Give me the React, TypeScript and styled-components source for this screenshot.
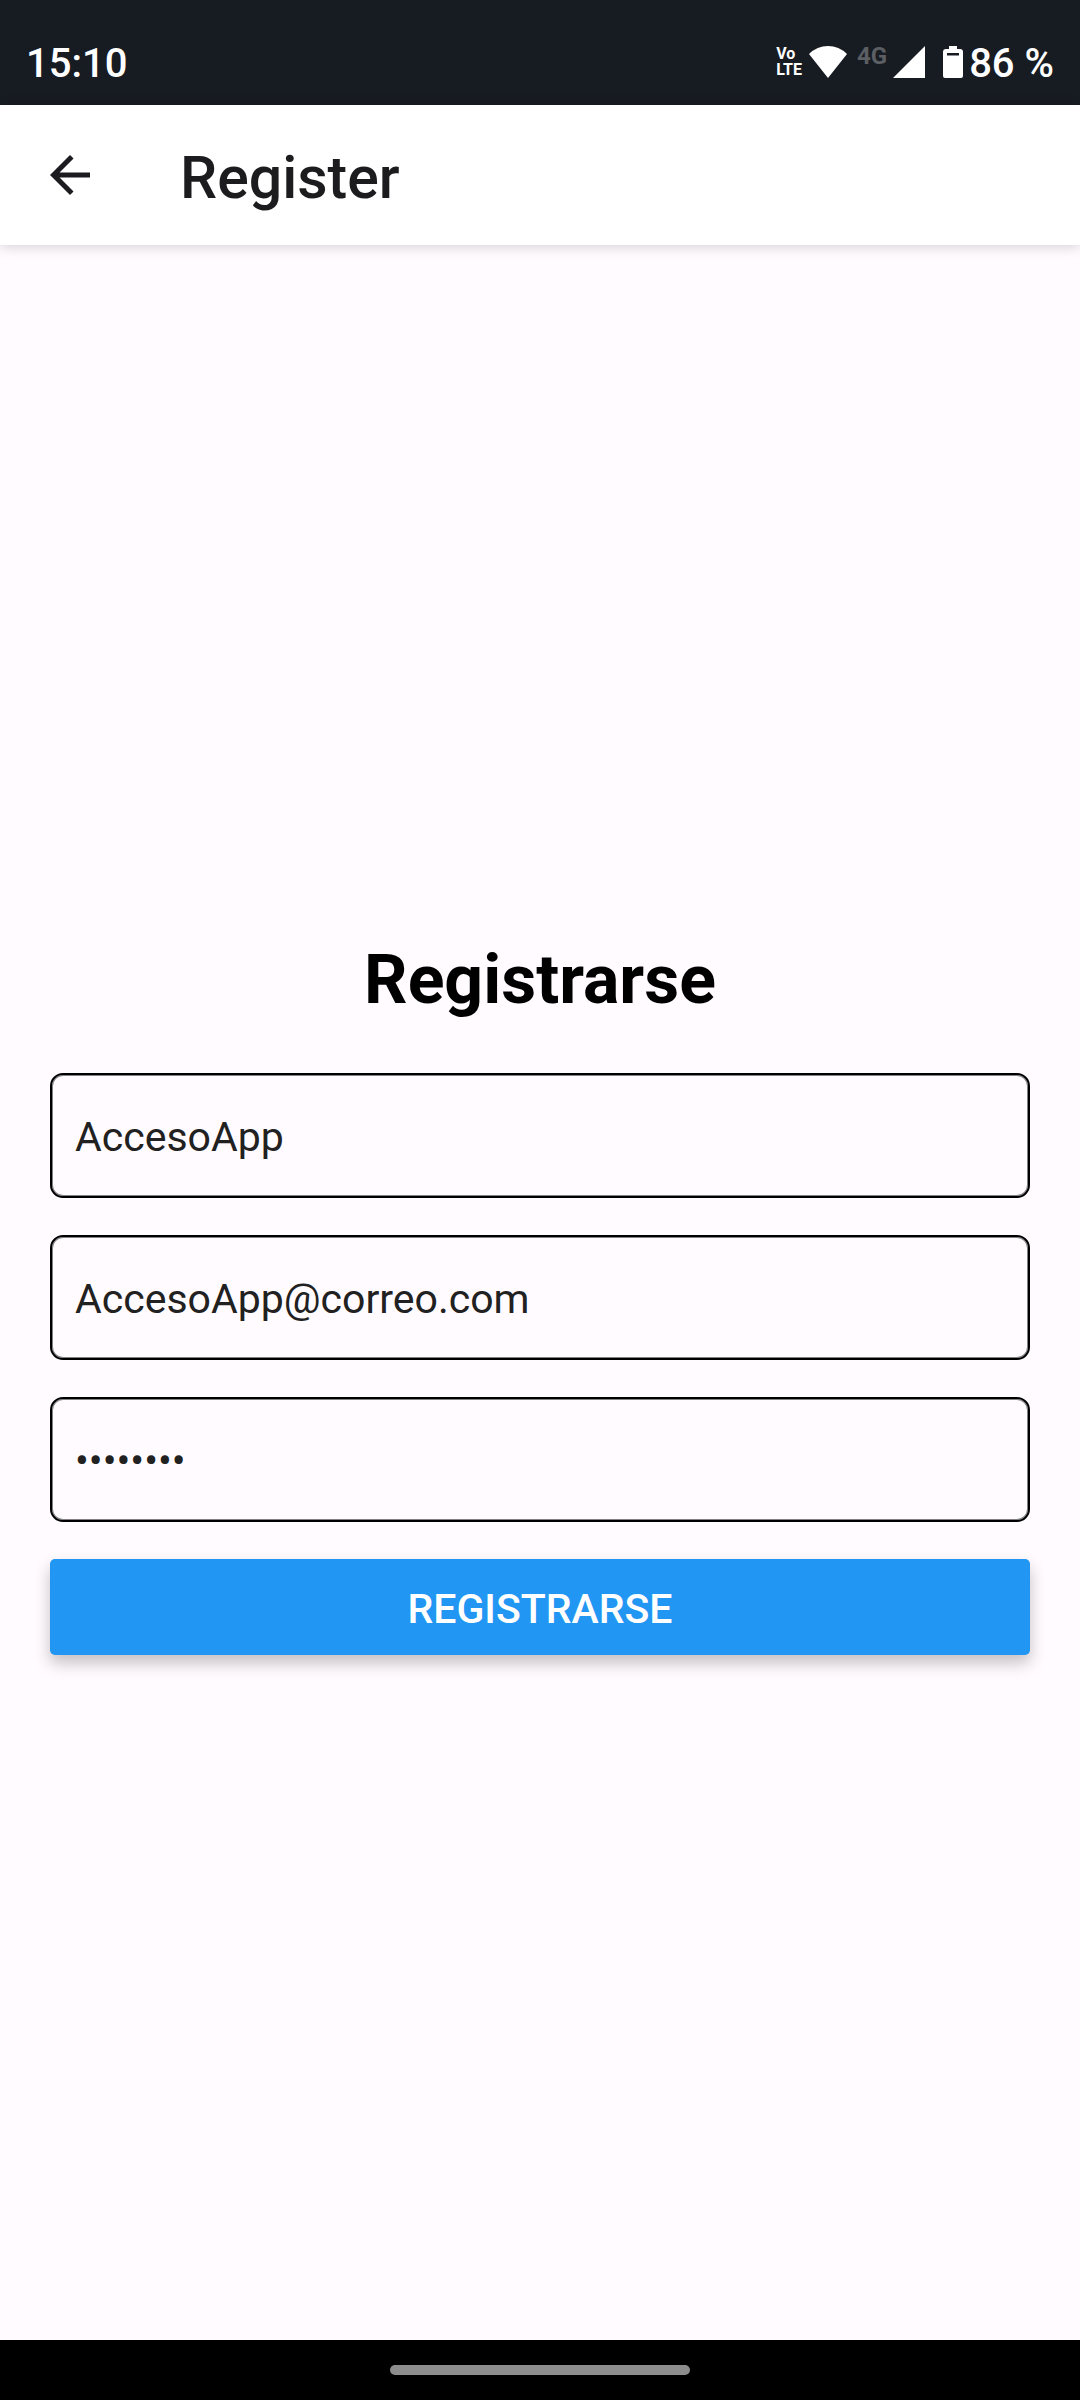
import React, { useState } from 'react';
import styled, { createGlobalStyle } from 'styled-components';

const GlobalStyle = createGlobalStyle`
  *, *::before, *::after {
    box-sizing: border-box;
  }
  body {
    margin: 0;
    background: #fffbff;
    font-family: Roboto, "Liberation Sans", sans-serif;
  }
`;

const Screen = styled.div`
  display: flex;
  flex-direction: column;
  min-height: 100vh;
`;

const StatusBar = styled.div`
  display: flex;
  justify-content: space-between;
  align-items: flex-start;
  padding: 40px 26px 17px;
  background: #171b22;
  color: #fff;
`;

const StatusText = styled.span`
  font-size: 40px;
  font-weight: 500;
  line-height: 48px;
  white-space: nowrap;
`;

const StatusIcons = styled.div`
  display: flex;
  align-items: flex-start;
`;

const StatusGlyph = styled.svg`
  display: block;
  height: 32px;
  margin-top: 6px;
  fill: currentColor;
`;

const VoLte = styled.span`
  display: flex;
  flex-direction: column;
  margin: 6px 7px 0 0;
  font-size: 16px;
  font-weight: 700;
  line-height: 16px;
`;

const NetworkType = styled.span`
  margin: 4px 6px 0 10px;
  color: #5b5e62;
  font-size: 24px;
  font-weight: 700;
  line-height: 24px;
`;

const Battery = styled.div`
  display: flex;
  align-items: flex-start;
  gap: 6px;
  margin-left: 18px;
`;

const AppBar = styled.header`
  display: flex;
  align-items: center;
  gap: 80px;
  height: 140px;
  padding: 0 40px;
  background: #fff;
  box-shadow: 0 2px 12px rgba(0, 0, 0, 0.17);
`;

const BackButton = styled.button`
  display: flex;
  padding: 0;
  border: 0;
  background: none;
  color: #1c1b1f;
  cursor: pointer;
`;

const Title = styled.h1`
  margin: 0;
  padding-top: 6px;
  color: #1c1c1e;
  font-size: 59px;
  font-weight: 500;
  line-height: 68px;
`;

const Main = styled.main`
  display: flex;
  flex: 1;
  flex-direction: column;
  justify-content: center;
  padding: 0 50px;
`;

const Heading = styled.h2`
  margin: 0 0 44px;
  color: #000;
  font-size: 68px;
  font-weight: 700;
  line-height: 98px;
  text-align: center;
`;

const Form = styled.form`
  display: flex;
  flex-direction: column;
  gap: 37px;
`;

const Field = styled.input`
  display: block;
  width: 100%;
  height: 125px;
  padding: 38px 23px 35px;
  border: 2px solid #000;
  border-radius: 13px;
  outline: 0;
  background: transparent;
  box-shadow: inset 0 0 0 1px #808080;
  color: #212121;
  font-family: inherit;
  font-size: 41px;
  line-height: 48px;
`;

const SubmitButton = styled.button`
  padding: 26px 16px 22px;
  border: 0;
  border-radius: 5px;
  background: #2196f3;
  box-shadow: 0 8px 16px rgba(0, 0, 0, 0.24);
  color: #fff;
  font-family: inherit;
  font-size: 41px;
  font-weight: 500;
  line-height: 48px;
  text-transform: uppercase;
  cursor: pointer;
`;

const NavBar = styled.div`
  display: flex;
  align-items: center;
  justify-content: center;
  height: 60px;
  background: #000;
`;

const HomeHandle = styled.span`
  width: 300px;
  height: 10px;
  border-radius: 5px;
  background: #8d8d8d;
`;

export default function App() {
  const [name, setName] = useState('AccesoApp');
  const [email, setEmail] = useState('AccesoApp@correo.com');
  const [password, setPassword] = useState('12345678');

  return (
    <Screen>
      <GlobalStyle />
      <StatusBar>
        <StatusText>15:10</StatusText>
        <StatusIcons>
          <VoLte>
            <span>Vo</span>
            <span>LTE</span>
          </VoLte>
          <StatusGlyph width="38" viewBox="0 0 38 32" aria-hidden="true">
            <path d="M0 8Q8 0 19 0T38 8L19 32Z" />
          </StatusGlyph>
          <NetworkType>4G</NetworkType>
          <StatusGlyph width="32" viewBox="0 0 32 32" aria-hidden="true">
            <path d="M32 0V32H0Z" />
          </StatusGlyph>
          <Battery>
            <StatusGlyph width="20" viewBox="0 0 20 32" aria-hidden="true">
              <path
                fillRule="evenodd"
                d="M6 0H14V3H17Q20 3 20 6V30Q20 32 18 32H2Q0 32 0 30V6Q0 3 3 3H6ZM4 7V9.5H16V7Z"
              />
            </StatusGlyph>
            <StatusText>86 %</StatusText>
          </Battery>
        </StatusIcons>
      </StatusBar>

      <AppBar>
        <BackButton type="button" aria-label="Back">
          <svg width="60" height="60" viewBox="0 0 24 24" fill="currentColor" aria-hidden="true">
            <path d="M20 11H7.83l5.59-5.59L12 4l-8 8 8 8 1.41-1.41L7.83 13H20v-2z" />
          </svg>
        </BackButton>
        <Title>Register</Title>
      </AppBar>

      <Main>
        <Heading>Registrarse</Heading>
        <Form onSubmit={(event) => event.preventDefault()}>
          <Field
            type="text"
            aria-label="Nombre"
            value={name}
            onChange={(event) => setName(event.target.value)}
          />
          <Field
            type="email"
            aria-label="Correo"
            value={email}
            onChange={(event) => setEmail(event.target.value)}
          />
          <Field
            type="password"
            aria-label="Contraseña"
            value={password}
            onChange={(event) => setPassword(event.target.value)}
          />
          <SubmitButton type="submit">Registrarse</SubmitButton>
        </Form>
      </Main>

      <NavBar>
        <HomeHandle />
      </NavBar>
    </Screen>
  );
}
